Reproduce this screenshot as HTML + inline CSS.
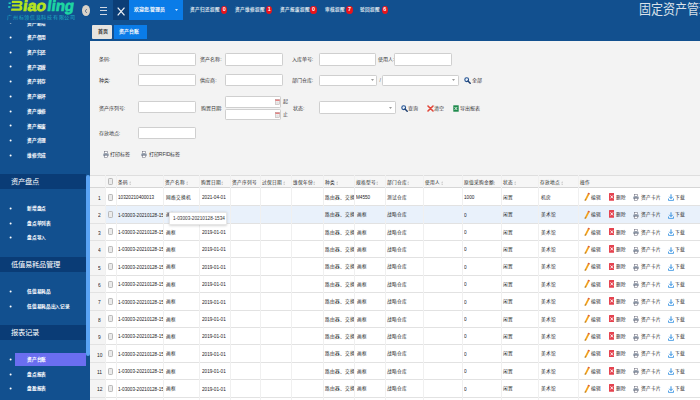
<!DOCTYPE html><html lang="zh-CN"><head><meta charset="utf-8"><style>
*{margin:0;padding:0;box-sizing:border-box}
html,body{width:700px;height:400px;overflow:hidden;background:#12508f;font-family:"Liberation Sans",sans-serif}
.ab{position:absolute;white-space:nowrap}
.t{position:absolute;white-space:nowrap;line-height:1}
.b{font-weight:bold}
</style></head><body>

<div class="ab" style="left:0;top:0;width:90px;height:400px;background:#12508f">
<div class="ab" style="left:0;top:21px;width:90px;height:379px">
<svg class="ab" style="left:8px;top:-0.70px" width="5" height="5" viewBox="0 0 5 5"><circle cx="2.6" cy="2.5" r="1.0" fill="#fff"/></svg>
<div class="t b" style="left:27.20px;top:0.61px;font-size:4.65px;color:#fff;letter-spacing:-0.3px">资产新增</div>
<svg class="ab" style="left:8px;top:14.00px" width="5" height="5" viewBox="0 0 5 5"><circle cx="2.6" cy="2.5" r="1.0" fill="#fff"/></svg>
<div class="t b" style="left:27.20px;top:15.31px;font-size:4.65px;color:#fff;letter-spacing:-0.3px">资产借用</div>
<svg class="ab" style="left:8px;top:28.70px" width="5" height="5" viewBox="0 0 5 5"><circle cx="2.6" cy="2.5" r="1.0" fill="#fff"/></svg>
<div class="t b" style="left:27.20px;top:30.01px;font-size:4.65px;color:#fff;letter-spacing:-0.3px">资产归还</div>
<svg class="ab" style="left:8px;top:43.40px" width="5" height="5" viewBox="0 0 5 5"><circle cx="2.6" cy="2.5" r="1.0" fill="#fff"/></svg>
<div class="t b" style="left:27.20px;top:44.71px;font-size:4.65px;color:#fff;letter-spacing:-0.3px">资产调拨</div>
<svg class="ab" style="left:8px;top:58.10px" width="5" height="5" viewBox="0 0 5 5"><circle cx="2.6" cy="2.5" r="1.0" fill="#fff"/></svg>
<div class="t b" style="left:27.20px;top:59.41px;font-size:4.65px;color:#fff;letter-spacing:-0.3px">资产转存</div>
<svg class="ab" style="left:8px;top:72.80px" width="5" height="5" viewBox="0 0 5 5"><circle cx="2.6" cy="2.5" r="1.0" fill="#fff"/></svg>
<div class="t b" style="left:27.20px;top:74.11px;font-size:4.65px;color:#fff;letter-spacing:-0.3px">资产损坏</div>
<svg class="ab" style="left:8px;top:87.50px" width="5" height="5" viewBox="0 0 5 5"><circle cx="2.6" cy="2.5" r="1.0" fill="#fff"/></svg>
<div class="t b" style="left:27.20px;top:88.81px;font-size:4.65px;color:#fff;letter-spacing:-0.3px">资产维修</div>
<svg class="ab" style="left:8px;top:102.20px" width="5" height="5" viewBox="0 0 5 5"><circle cx="2.6" cy="2.5" r="1.0" fill="#fff"/></svg>
<div class="t b" style="left:27.20px;top:103.51px;font-size:4.65px;color:#fff;letter-spacing:-0.3px">资产报废</div>
<svg class="ab" style="left:8px;top:116.90px" width="5" height="5" viewBox="0 0 5 5"><circle cx="2.6" cy="2.5" r="1.0" fill="#fff"/></svg>
<div class="t b" style="left:27.20px;top:118.21px;font-size:4.65px;color:#fff;letter-spacing:-0.3px">资产清理</div>
<svg class="ab" style="left:8px;top:131.60px" width="5" height="5" viewBox="0 0 5 5"><circle cx="2.6" cy="2.5" r="1.0" fill="#fff"/></svg>
<div class="t b" style="left:27.20px;top:132.91px;font-size:4.65px;color:#fff;letter-spacing:-0.3px">维修完成</div>
<svg class="ab" style="left:8px;top:185.00px" width="5" height="5" viewBox="0 0 5 5"><circle cx="2.6" cy="2.5" r="1.0" fill="#fff"/></svg>
<div class="t b" style="left:27.20px;top:186.31px;font-size:4.65px;color:#fff;letter-spacing:-0.3px">新增盘点</div>
<svg class="ab" style="left:8px;top:199.80px" width="5" height="5" viewBox="0 0 5 5"><circle cx="2.6" cy="2.5" r="1.0" fill="#fff"/></svg>
<div class="t b" style="left:27.20px;top:201.11px;font-size:4.65px;color:#fff;letter-spacing:-0.3px">盘点单列表</div>
<svg class="ab" style="left:8px;top:214.00px" width="5" height="5" viewBox="0 0 5 5"><circle cx="2.6" cy="2.5" r="1.0" fill="#fff"/></svg>
<div class="t b" style="left:27.20px;top:215.31px;font-size:4.65px;color:#fff;letter-spacing:-0.3px">盘点导入</div>
<svg class="ab" style="left:8px;top:267.50px" width="5" height="5" viewBox="0 0 5 5"><circle cx="2.6" cy="2.5" r="1.0" fill="#fff"/></svg>
<div class="t b" style="left:27.20px;top:268.81px;font-size:4.65px;color:#fff;letter-spacing:-0.3px">低值易耗品</div>
<svg class="ab" style="left:8px;top:282.50px" width="5" height="5" viewBox="0 0 5 5"><circle cx="2.6" cy="2.5" r="1.0" fill="#fff"/></svg>
<div class="t b" style="left:27.20px;top:283.81px;font-size:4.65px;color:#fff;letter-spacing:-0.3px">低值易耗品出入记录</div>
<div class="ab" style="left:15px;top:331.60px;width:71px;height:13.8px;background:#6b6ef0"></div>
<svg class="ab" style="left:8px;top:336.00px" width="5" height="5" viewBox="0 0 5 5"><circle cx="2.6" cy="2.5" r="1.0" fill="#fff"/></svg>
<div class="t b" style="left:27.20px;top:337.31px;font-size:4.65px;color:#fff;letter-spacing:-0.3px">资产台账</div>
<svg class="ab" style="left:8px;top:350.50px" width="5" height="5" viewBox="0 0 5 5"><circle cx="2.6" cy="2.5" r="1.0" fill="#fff"/></svg>
<div class="t b" style="left:27.20px;top:351.81px;font-size:4.65px;color:#fff;letter-spacing:-0.3px">盘点报表</div>
<svg class="ab" style="left:8px;top:365.10px" width="5" height="5" viewBox="0 0 5 5"><circle cx="2.6" cy="2.5" r="1.0" fill="#fff"/></svg>
<div class="t b" style="left:27.20px;top:366.41px;font-size:4.65px;color:#fff;letter-spacing:-0.3px">盘盈报表</div>
<div class="ab" style="left:0;top:153.00px;width:86px;height:15.30px;background:#0a3c76"></div>
<div class="t" style="left:11.30px;top:157.37px;font-size:7.30px;color:#ffffff;">资产盘点</div>
<div class="ab" style="left:0;top:236.00px;width:86px;height:14.80px;background:#0a3c76"></div>
<div class="t" style="left:11.30px;top:240.11px;font-size:7.30px;color:#ffffff;">低值易耗品管理</div>
<div class="ab" style="left:0;top:304.00px;width:86px;height:14.80px;background:#0a3c76"></div>
<div class="t" style="left:11.30px;top:308.11px;font-size:7.30px;color:#ffffff;">报表记录</div>
<div class="ab" style="left:86.2px;top:153.60px;width:3.6px;height:181.40px;border-radius:2px;background:#5aa3f4"></div>
</div>
<div class="ab" style="left:0;top:0;width:90px;height:22.8px;background:#12508f"></div>
<svg class="ab" style="left:0;top:0" width="90" height="21" viewBox="0 0 90 21">
<g fill="#b6e41e">
<path d="M12.0 0.8H19.6Q22.8 0.8 22.6 3.4Q22.4 5.2 21.0 5.6Q22.6 6.2 22.4 8.2Q22.1 10.8 18.8 10.8H11.0L11.4 8.6H18.4Q19.6 8.6 19.7 7.7Q19.8 6.6 18.6 6.6H11.8L12.1 4.6H18.8Q20.0 4.6 20.1 3.8Q20.2 3.0 19.0 3.0H11.6Z"/>
</g>
<rect x="8.6" y="2.4" width="2.2" height="1.6" fill="#22d0c0"/>
<rect x="8.2" y="6.2" width="2.2" height="1.6" fill="#22d0c0"/>
<g transform="translate(1.0 0) skewX(-8)">
<text x="23.0" y="10.8" font-family="Liberation Sans" font-weight="bold" font-size="15.2" fill="#b6e41e" stroke="#b6e41e" stroke-width="0.7" textLength="23" lengthAdjust="spacingAndGlyphs">iao</text>
<text x="47.4" y="10.8" font-family="Liberation Sans" font-weight="bold" font-size="15.2" fill="#1ed6a2" stroke="#1ed6a2" stroke-width="0.7" textLength="26.6" lengthAdjust="spacingAndGlyphs">ling</text>
</g>
</svg>
<div class="t" style="left:7.40px;top:14.65px;font-size:5.00px;color:#20b2c6;letter-spacing:0.68px">广州标领信息科技有限公司</div>
</div>
<div class="ab" style="left:81.5px;top:5.1px;width:8.6px;height:11.2px;border-radius:50%;background:#d9d3c9"></div>
<svg class="ab" style="left:84px;top:8px" width="4" height="6" viewBox="0 0 4 6"><path d="M2.8 1L1.2 3L2.8 5" stroke="#6b7b94" stroke-width="1" fill="none"/></svg>
<div class="ab" style="left:100px;top:6.60px;width:7.2px;height:1px;background:#cfd7e3"></div>
<div class="ab" style="left:100px;top:10.10px;width:7.2px;height:1px;background:#cfd7e3"></div>
<div class="ab" style="left:100px;top:13.60px;width:7.2px;height:1px;background:#cfd7e3"></div>
<div class="ab" style="left:113px;top:0;width:16px;height:19.8px;background:#0c3e76"></div>
<svg class="ab" style="left:116.8px;top:6.6px" width="8.2" height="9" viewBox="0 0 8.2 9"><path d="M0.7 0.7L7.5 8.3M7.5 0.7L0.7 8.3" stroke="#eef2f6" stroke-width="1.25"/></svg>
<div class="ab" style="left:129px;top:0;width:54px;height:19.8px;background:#0a7ce8"></div>
<div class="t b" style="left:134.00px;top:8.20px;font-size:4.90px;color:#f6f9fc;">欢迎您,管理员</div>
<svg class="ab" style="left:175px;top:8.8px" width="3" height="2" viewBox="0 0 3 2"><path d="M0 0H3L1.5 1.9Z" fill="#d4e6fb"/></svg>
<div class="t b" style="left:190.00px;top:7.73px;font-size:4.60px;color:#d9e1ea;letter-spacing:-0.1px">资产归还提醒</div>
<div class="ab" style="left:221.00px;top:5.8px;width:6.3px;height:8.2px;border-radius:50%;background:#e8141b"></div>
<div class="t b" style="left:221.00px;top:7.31px;width:6.3px;text-align:center;font-size:5.4px;color:#fff">0</div>
<div class="t b" style="left:235.00px;top:7.73px;font-size:4.60px;color:#d9e1ea;letter-spacing:-0.1px">资产维修提醒</div>
<div class="ab" style="left:266.00px;top:5.8px;width:6.3px;height:8.2px;border-radius:50%;background:#e8141b"></div>
<div class="t b" style="left:266.00px;top:7.31px;width:6.3px;text-align:center;font-size:5.4px;color:#fff">1</div>
<div class="t b" style="left:280.20px;top:7.73px;font-size:4.60px;color:#d9e1ea;letter-spacing:-0.1px">资产报废提醒</div>
<div class="ab" style="left:310.30px;top:5.8px;width:6.3px;height:8.2px;border-radius:50%;background:#e8141b"></div>
<div class="t b" style="left:310.30px;top:7.31px;width:6.3px;text-align:center;font-size:5.4px;color:#fff">0</div>
<div class="t b" style="left:324.90px;top:7.73px;font-size:4.60px;color:#d9e1ea;letter-spacing:-0.1px">审核提醒</div>
<div class="ab" style="left:346.30px;top:5.8px;width:6.3px;height:8.2px;border-radius:50%;background:#e8141b"></div>
<div class="t b" style="left:346.30px;top:7.31px;width:6.3px;text-align:center;font-size:5.4px;color:#fff">7</div>
<div class="t b" style="left:360.20px;top:7.73px;font-size:4.60px;color:#d9e1ea;letter-spacing:-0.1px">驳回提醒</div>
<div class="ab" style="left:381.50px;top:5.8px;width:6.3px;height:8.2px;border-radius:50%;background:#e8141b"></div>
<div class="t b" style="left:381.50px;top:7.31px;width:6.3px;text-align:center;font-size:5.4px;color:#fff">6</div>
<div class="t" style="left:638.80px;top:4.20px;font-size:12.00px;color:#dce2ea;transform:scaleY(1.12);transform-origin:0 50%">固定资产管理</div>
<div class="ab" style="left:92px;top:25px;width:20px;height:13.8px;background:#e6e4e0;border-radius:1px"></div>
<div class="t b" style="left:97.50px;top:29.80px;font-size:4.90px;color:#333;">首页</div>
<div class="ab" style="left:114px;top:25px;width:33.2px;height:13.8px;background:#0a7ce8"></div>
<div class="t b" style="left:118.90px;top:29.80px;font-size:4.90px;color:#f6f9fc;">资产台账</div>
<div class="ab" style="left:90.3px;top:40.6px;width:610px;height:360px;background:#f3f3f3"></div>
<div class="t" style="left:98.80px;top:57.35px;font-size:5.00px;color:#363636;">条码:</div>
<div class="ab" style="left:137.60px;top:53.40px;width:58.00px;height:12.20px;background:#fff;border:0.6px solid #cfcfcf;border-radius:1.2px"></div>
<div class="t" style="left:200.30px;top:57.35px;font-size:5.00px;color:#363636;">资产名称:</div>
<div class="ab" style="left:225.30px;top:53.40px;width:58.00px;height:12.20px;background:#fff;border:0.6px solid #cfcfcf;border-radius:1.2px"></div>
<div class="t" style="left:291.80px;top:57.35px;font-size:5.00px;color:#363636;">入库单号:</div>
<div class="ab" style="left:318.50px;top:53.40px;width:57.90px;height:12.20px;background:#fff;border:0.6px solid #cfcfcf;border-radius:1.2px"></div>
<div class="t" style="left:378.00px;top:57.35px;font-size:5.00px;color:#363636;">使用人:</div>
<div class="ab" style="left:394.30px;top:53.40px;width:58.00px;height:12.20px;background:#fff;border:0.6px solid #cfcfcf;border-radius:1.2px"></div>
<div class="t" style="left:98.80px;top:78.35px;font-size:5.00px;color:#363636;">种类:</div>
<div class="ab" style="left:137.60px;top:74.40px;width:58.00px;height:12.10px;background:#fff;border:0.6px solid #cfcfcf;border-radius:1.2px"></div>
<div class="t" style="left:200.30px;top:78.35px;font-size:5.00px;color:#363636;">供应商:</div>
<div class="ab" style="left:225.30px;top:74.40px;width:58.00px;height:12.10px;background:#fff;border:0.6px solid #cfcfcf;border-radius:1.2px"></div>
<div class="t" style="left:291.80px;top:78.35px;font-size:5.00px;color:#363636;">部门仓库:</div>
<div class="ab" style="left:318.50px;top:74.50px;width:58.90px;height:11.70px;background:#fff;border:0.6px solid #cfcfcf;border-radius:1.2px"></div>
<svg class="ab" style="left:370.80px;top:79.45px" width="3" height="2" viewBox="0 0 3 2"><path d="M0 0H3L1.5 1.9Z" fill="#9a9a9a"/></svg>
<div class="t" style="left:379.60px;top:78.15px;font-size:5.00px;color:#666;">/</div>
<div class="ab" style="left:382.30px;top:74.50px;width:76.70px;height:11.70px;background:#fff;border:0.6px solid #cfcfcf;border-radius:1.2px"></div>
<svg class="ab" style="left:452.40px;top:79.45px" width="3" height="2" viewBox="0 0 3 2"><path d="M0 0H3L1.5 1.9Z" fill="#9a9a9a"/></svg>
<svg class="ab" style="left:464.30px;top:77.00px" width="7" height="7" viewBox="0 0 7 7"><circle cx="2.7" cy="2.7" r="1.9" fill="#e8f0fa" stroke="#1f4f8f" stroke-width="1.1"/><path d="M4 4L6.2 6.2" stroke="#1f3f6f" stroke-width="1.5" stroke-linecap="round"/></svg>
<div class="t" style="left:472.00px;top:78.35px;font-size:5.00px;color:#363636;">全部</div>
<div class="t" style="left:98.80px;top:105.75px;font-size:5.00px;color:#363636;">资产序列号:</div>
<div class="ab" style="left:137.60px;top:101.40px;width:58.00px;height:12.00px;background:#fff;border:0.6px solid #cfcfcf;border-radius:1.2px"></div>
<div class="t" style="left:200.60px;top:105.75px;font-size:5.00px;color:#363636;">购置日期:</div>
<div class="ab" style="left:225.00px;top:95.70px;width:56.00px;height:12.00px;background:#fff;border:0.6px solid #cfcfcf;border-radius:1.2px"></div>
<div class="ab" style="left:225.00px;top:108.90px;width:56.00px;height:11.40px;background:#fff;border:0.6px solid #cfcfcf;border-radius:1.2px"></div>
<svg class="ab" style="left:274.50px;top:98.80px" width="5" height="6" viewBox="0 0 5 6"><rect x="0.4" y="0.6" width="4.2" height="5" fill="#fff" stroke="#a99" stroke-width="0.5"/><rect x="0.4" y="0.6" width="4.2" height="1.2" fill="#d66"/><path d="M1.2 3h2.6M1.2 4.2h2.6" stroke="#999" stroke-width="0.4"/></svg>
<svg class="ab" style="left:274.50px;top:111.80px" width="5" height="6" viewBox="0 0 5 6"><rect x="0.4" y="0.6" width="4.2" height="5" fill="#fff" stroke="#a99" stroke-width="0.5"/><rect x="0.4" y="0.6" width="4.2" height="1.2" fill="#d66"/><path d="M1.2 3h2.6M1.2 4.2h2.6" stroke="#999" stroke-width="0.4"/></svg>
<div class="t" style="left:283.00px;top:99.35px;font-size:5.00px;color:#363636;">起</div>
<div class="t" style="left:283.00px;top:112.35px;font-size:5.00px;color:#363636;">止</div>
<div class="t" style="left:292.90px;top:105.75px;font-size:5.00px;color:#363636;">状态:</div>
<div class="ab" style="left:318.60px;top:101.40px;width:77.10px;height:12.30px;background:#fff;border:0.6px solid #cfcfcf;border-radius:1.2px"></div>
<svg class="ab" style="left:389.10px;top:106.65px" width="3" height="2" viewBox="0 0 3 2"><path d="M0 0H3L1.5 1.9Z" fill="#9a9a9a"/></svg>
<svg class="ab" style="left:400.90px;top:104.50px" width="7" height="7" viewBox="0 0 7 7"><circle cx="2.7" cy="2.7" r="1.9" fill="#e8f0fa" stroke="#1f4f8f" stroke-width="1.1"/><path d="M4 4L6.2 6.2" stroke="#1f3f6f" stroke-width="1.5" stroke-linecap="round"/></svg>
<div class="t" style="left:408.00px;top:105.75px;font-size:5.00px;color:#363636;">查询</div>
<svg class="ab" style="left:426.6px;top:104.5px" width="7" height="7" viewBox="0 0 7 7"><path d="M1 1L6 6M6 1L1 6" stroke="#e2473a" stroke-width="1.6" stroke-linecap="round"/></svg>
<div class="t" style="left:434.00px;top:105.75px;font-size:5.00px;color:#363636;">清空</div>
<svg class="ab" style="left:452.9px;top:104.5px" width="6" height="7" viewBox="0 0 6 7"><rect x="0.3" y="0.3" width="5.4" height="6.4" fill="#1e8a4c"/><path d="M1.6 2L4.2 5M4.2 2L1.6 5" stroke="#fff" stroke-width="0.8"/></svg>
<div class="t" style="left:460.00px;top:105.75px;font-size:5.00px;color:#363636;">导出报表</div>
<div class="t" style="left:98.80px;top:131.35px;font-size:5.00px;color:#363636;">存放地点:</div>
<div class="ab" style="left:137.60px;top:126.60px;width:58.00px;height:12.40px;background:#fff;border:0.6px solid #cfcfcf;border-radius:1.2px"></div>
<svg class="ab" style="left:102.80px;top:151.00px" width="6" height="7" viewBox="0 0 6 7"><rect x="1.5" y="0.5" width="3" height="2" fill="#fff" stroke="#667" stroke-width="0.5"/><rect x="0.3" y="2.4" width="5.4" height="2.8" rx="0.6" fill="#8a96a6"/><rect x="1.5" y="4.2" width="3" height="2.3" fill="#fff" stroke="#667" stroke-width="0.5"/></svg>
<div class="t" style="left:110.00px;top:152.05px;font-size:5.00px;color:#363636;">打印标签</div>
<svg class="ab" style="left:141.40px;top:151.00px" width="6" height="7" viewBox="0 0 6 7"><rect x="1.5" y="0.5" width="3" height="2" fill="#fff" stroke="#667" stroke-width="0.5"/><rect x="0.3" y="2.4" width="5.4" height="2.8" rx="0.6" fill="#8a96a6"/><rect x="1.5" y="4.2" width="3" height="2.3" fill="#fff" stroke="#667" stroke-width="0.5"/></svg>
<div class="t" style="left:148.80px;top:152.05px;font-size:5.00px;color:#363636;">打印RFID标签</div>
<div class="ab" style="left:90.3px;top:175.00px;width:610px;height:225.00px;background:#fff"></div>
<div class="ab" style="left:90.3px;top:174.80px;width:610px;height:13.20px;background:#f6f6f6;border-top:0.5px solid #dedede;border-bottom:0.6px solid #d6d6d6"></div>
<div class="ab" style="left:90.3px;top:188.20px;width:14.7px;height:400.00px;background:#f4f4f4"></div>
<div class="t" style="left:117.60px;top:180.98px;font-size:4.70px;color:#262626;">条码</div>
<svg class="ab" style="left:128.60px;top:180.80px" width="2.4" height="4.6" viewBox="0 0 2.4 4.6"><path d="M1.2 0.2L2.2 1.8H0.2Z M1.2 4.4L2.2 2.8H0.2Z" fill="#c2c2c2"/></svg>
<div class="t" style="left:165.30px;top:180.98px;font-size:4.70px;color:#262626;">资产名称</div>
<svg class="ab" style="left:185.70px;top:180.80px" width="2.4" height="4.6" viewBox="0 0 2.4 4.6"><path d="M1.2 0.2L2.2 1.8H0.2Z M1.2 4.4L2.2 2.8H0.2Z" fill="#c2c2c2"/></svg>
<div class="t" style="left:201.00px;top:180.98px;font-size:4.70px;color:#262626;">购置日期</div>
<svg class="ab" style="left:221.40px;top:180.80px" width="2.4" height="4.6" viewBox="0 0 2.4 4.6"><path d="M1.2 0.2L2.2 1.8H0.2Z M1.2 4.4L2.2 2.8H0.2Z" fill="#c2c2c2"/></svg>
<div class="t" style="left:232.20px;top:180.98px;font-size:4.70px;color:#262626;">资产序列号</div>
<div class="t" style="left:262.20px;top:180.98px;font-size:4.70px;color:#262626;">过保日期</div>
<svg class="ab" style="left:282.60px;top:180.80px" width="2.4" height="4.6" viewBox="0 0 2.4 4.6"><path d="M1.2 0.2L2.2 1.8H0.2Z M1.2 4.4L2.2 2.8H0.2Z" fill="#c2c2c2"/></svg>
<div class="t" style="left:293.00px;top:180.98px;font-size:4.70px;color:#262626;">维保年份</div>
<svg class="ab" style="left:313.40px;top:180.80px" width="2.4" height="4.6" viewBox="0 0 2.4 4.6"><path d="M1.2 0.2L2.2 1.8H0.2Z M1.2 4.4L2.2 2.8H0.2Z" fill="#c2c2c2"/></svg>
<div class="t" style="left:324.50px;top:180.98px;font-size:4.70px;color:#262626;">种类</div>
<svg class="ab" style="left:335.50px;top:180.80px" width="2.4" height="4.6" viewBox="0 0 2.4 4.6"><path d="M1.2 0.2L2.2 1.8H0.2Z M1.2 4.4L2.2 2.8H0.2Z" fill="#c2c2c2"/></svg>
<div class="t" style="left:355.90px;top:180.98px;font-size:4.70px;color:#262626;">规格型号</div>
<svg class="ab" style="left:376.30px;top:180.80px" width="2.4" height="4.6" viewBox="0 0 2.4 4.6"><path d="M1.2 0.2L2.2 1.8H0.2Z M1.2 4.4L2.2 2.8H0.2Z" fill="#c2c2c2"/></svg>
<div class="t" style="left:386.50px;top:180.98px;font-size:4.70px;color:#262626;">部门仓库</div>
<svg class="ab" style="left:406.90px;top:180.80px" width="2.4" height="4.6" viewBox="0 0 2.4 4.6"><path d="M1.2 0.2L2.2 1.8H0.2Z M1.2 4.4L2.2 2.8H0.2Z" fill="#c2c2c2"/></svg>
<div class="t" style="left:424.80px;top:180.98px;font-size:4.70px;color:#262626;">使用人</div>
<svg class="ab" style="left:440.50px;top:180.80px" width="2.4" height="4.6" viewBox="0 0 2.4 4.6"><path d="M1.2 0.2L2.2 1.8H0.2Z M1.2 4.4L2.2 2.8H0.2Z" fill="#c2c2c2"/></svg>
<div class="t" style="left:463.60px;top:180.98px;font-size:4.70px;color:#262626;">原值采购金额</div>
<svg class="ab" style="left:493.40px;top:180.80px" width="2.4" height="4.6" viewBox="0 0 2.4 4.6"><path d="M1.2 0.2L2.2 1.8H0.2Z M1.2 4.4L2.2 2.8H0.2Z" fill="#c2c2c2"/></svg>
<div class="t" style="left:502.50px;top:180.98px;font-size:4.70px;color:#262626;">状态</div>
<svg class="ab" style="left:513.50px;top:180.80px" width="2.4" height="4.6" viewBox="0 0 2.4 4.6"><path d="M1.2 0.2L2.2 1.8H0.2Z M1.2 4.4L2.2 2.8H0.2Z" fill="#c2c2c2"/></svg>
<div class="t" style="left:540.20px;top:180.98px;font-size:4.70px;color:#262626;">存放地点</div>
<svg class="ab" style="left:560.60px;top:180.80px" width="2.4" height="4.6" viewBox="0 0 2.4 4.6"><path d="M1.2 0.2L2.2 1.8H0.2Z M1.2 4.4L2.2 2.8H0.2Z" fill="#c2c2c2"/></svg>
<div class="t" style="left:579.90px;top:180.98px;font-size:4.70px;color:#262626;">操作</div>
<div class="ab" style="left:108px;top:178px;width:5.4px;height:7.2px;border:0.75px solid #b9b9b9;border-radius:1.2px;background:#ebebeb"></div>
<div class="ab" style="left:90.3px;top:205.10px;width:610px;height:0.5px;background:#e2e2e2"></div>
<div class="t" style="left:98.00px;top:194.97px;font-size:6.10px;color:#1e1e1e;transform:scaleX(0.800);transform-origin:0 0">1</div>
<div class="ab" style="left:108px;top:193.50px;width:5.4px;height:7.2px;border:0.75px solid #b9b9b9;border-radius:1.2px;background:#ebebeb"></div>
<div class="t" style="left:118.10px;top:195.12px;font-size:5.80px;color:#222;transform:scaleX(0.800);transform-origin:0 0">10320210400013</div>
<div class="t" style="left:166.00px;top:195.81px;font-size:4.65px;color:#1c1c1c;">网络交换机</div>
<div class="t" style="left:201.50px;top:195.12px;font-size:5.80px;color:#222;transform:scaleX(0.800);transform-origin:0 0">2021-04-01</div>
<div class="t" style="left:325.20px;top:195.81px;font-size:4.65px;color:#1c1c1c;">路由器、交换</div>
<div class="t" style="left:356.40px;top:195.12px;font-size:5.80px;color:#222;transform:scaleX(0.800);transform-origin:0 0">M4550</div>
<div class="t" style="left:387.20px;top:195.81px;font-size:4.65px;color:#1c1c1c;">测试仓库</div>
<div class="t" style="left:464.10px;top:195.12px;font-size:5.80px;color:#222;transform:scaleX(0.800);transform-origin:0 0">1000</div>
<div class="t" style="left:503.20px;top:195.81px;font-size:4.65px;color:#1c1c1c;">闲置</div>
<div class="t" style="left:540.90px;top:195.81px;font-size:4.65px;color:#1c1c1c;">机房</div>
<svg class="ab" style="left:583.6px;top:192.30px" width="7" height="10" viewBox="0 0 7 10"><path d="M4.2 0.8L5.8 1.6L2.4 8.2L0.9 8.9L0.8 7.4Z" fill="#f2a21e"/><path d="M4.2 0.8L5.8 1.6L5.3 2.6L3.7 1.8Z" fill="#d9534f"/><path d="M0.9 8.9L0.8 7.4L1.6 7.8Z" fill="#333"/></svg>
<div class="t" style="left:591.00px;top:195.78px;font-size:4.70px;color:#1c1c1c;">编辑</div>
<svg class="ab" style="left:608.8px;top:192.90px" width="5.6" height="7.8" viewBox="0 0 5.6 7.8"><rect width="5.6" height="7.8" rx="0.5" fill="#e5434f"/><path d="M1.5 2.4L4.1 5.4M4.1 2.4L1.5 5.4" stroke="#fff" stroke-width="0.9"/></svg>
<div class="t" style="left:616.00px;top:195.78px;font-size:4.70px;color:#1c1c1c;">删除</div>
<svg class="ab" style="left:633.00px;top:194.40px" width="6" height="7" viewBox="0 0 6 7"><rect x="1.5" y="0.5" width="3" height="2" fill="#fff" stroke="#667" stroke-width="0.5"/><rect x="0.3" y="2.4" width="5.4" height="2.8" rx="0.6" fill="#8a96a6"/><rect x="1.5" y="4.2" width="3" height="2.3" fill="#fff" stroke="#667" stroke-width="0.5"/></svg>
<div class="t" style="left:640.50px;top:195.78px;font-size:4.70px;color:#1c1c1c;">资产卡片</div>
<svg class="ab" style="left:667.5px;top:194.40px" width="6" height="7" viewBox="0 0 6 7"><path d="M3 0.3V4.3M1.3 2.8L3 4.6L4.7 2.8" stroke="#2f8ee0" stroke-width="1" fill="none"/><path d="M0.5 4.5V6.4H5.5V4.5" stroke="#2f8ee0" stroke-width="0.8" fill="none"/></svg>
<div class="t" style="left:675.00px;top:195.78px;font-size:4.70px;color:#1c1c1c;">下载</div>
<div class="ab" style="left:105px;top:205.60px;width:595px;height:17.40px;background:#e9f1fb"></div>
<div class="ab" style="left:90.3px;top:222.50px;width:610px;height:0.5px;background:#e2e2e2"></div>
<div class="t" style="left:98.00px;top:212.37px;font-size:6.10px;color:#1e1e1e;transform:scaleX(0.800);transform-origin:0 0">2</div>
<div class="ab" style="left:108px;top:210.90px;width:5.4px;height:7.2px;border:0.75px solid #b9b9b9;border-radius:1.2px;background:#ebebeb"></div>
<div class="t" style="left:118.10px;top:212.52px;font-size:5.80px;color:#222;transform:scaleX(0.800);transform-origin:0 0">1-03003-20210128-15</div>
<div class="t" style="left:166.00px;top:213.21px;font-size:4.65px;color:#1c1c1c;">画框</div>
<div class="t" style="left:201.50px;top:212.52px;font-size:5.80px;color:#222;transform:scaleX(0.800);transform-origin:0 0">2019-01-01</div>
<div class="t" style="left:325.20px;top:213.21px;font-size:4.65px;color:#1c1c1c;">路由器、交换</div>
<div class="t" style="left:356.60px;top:213.21px;font-size:4.65px;color:#1c1c1c;">画框</div>
<div class="t" style="left:387.20px;top:213.21px;font-size:4.65px;color:#1c1c1c;">战略仓库</div>
<div class="t" style="left:464.10px;top:212.52px;font-size:5.80px;color:#222;transform:scaleX(0.800);transform-origin:0 0">0</div>
<div class="t" style="left:503.20px;top:213.21px;font-size:4.65px;color:#1c1c1c;">闲置</div>
<div class="t" style="left:540.90px;top:213.21px;font-size:4.65px;color:#1c1c1c;">美术馆</div>
<svg class="ab" style="left:583.6px;top:209.70px" width="7" height="10" viewBox="0 0 7 10"><path d="M4.2 0.8L5.8 1.6L2.4 8.2L0.9 8.9L0.8 7.4Z" fill="#f2a21e"/><path d="M4.2 0.8L5.8 1.6L5.3 2.6L3.7 1.8Z" fill="#d9534f"/><path d="M0.9 8.9L0.8 7.4L1.6 7.8Z" fill="#333"/></svg>
<div class="t" style="left:591.00px;top:213.18px;font-size:4.70px;color:#1c1c1c;">编辑</div>
<svg class="ab" style="left:608.8px;top:210.30px" width="5.6" height="7.8" viewBox="0 0 5.6 7.8"><rect width="5.6" height="7.8" rx="0.5" fill="#e5434f"/><path d="M1.5 2.4L4.1 5.4M4.1 2.4L1.5 5.4" stroke="#fff" stroke-width="0.9"/></svg>
<div class="t" style="left:616.00px;top:213.18px;font-size:4.70px;color:#1c1c1c;">删除</div>
<svg class="ab" style="left:633.00px;top:211.80px" width="6" height="7" viewBox="0 0 6 7"><rect x="1.5" y="0.5" width="3" height="2" fill="#fff" stroke="#667" stroke-width="0.5"/><rect x="0.3" y="2.4" width="5.4" height="2.8" rx="0.6" fill="#8a96a6"/><rect x="1.5" y="4.2" width="3" height="2.3" fill="#fff" stroke="#667" stroke-width="0.5"/></svg>
<div class="t" style="left:640.50px;top:213.18px;font-size:4.70px;color:#1c1c1c;">资产卡片</div>
<svg class="ab" style="left:667.5px;top:211.80px" width="6" height="7" viewBox="0 0 6 7"><path d="M3 0.3V4.3M1.3 2.8L3 4.6L4.7 2.8" stroke="#2f8ee0" stroke-width="1" fill="none"/><path d="M0.5 4.5V6.4H5.5V4.5" stroke="#2f8ee0" stroke-width="0.8" fill="none"/></svg>
<div class="t" style="left:675.00px;top:213.18px;font-size:4.70px;color:#1c1c1c;">下载</div>
<div class="ab" style="left:90.3px;top:239.90px;width:610px;height:0.5px;background:#e2e2e2"></div>
<div class="t" style="left:98.00px;top:229.77px;font-size:6.10px;color:#1e1e1e;transform:scaleX(0.800);transform-origin:0 0">3</div>
<div class="ab" style="left:108px;top:228.30px;width:5.4px;height:7.2px;border:0.75px solid #b9b9b9;border-radius:1.2px;background:#ebebeb"></div>
<div class="t" style="left:118.10px;top:229.92px;font-size:5.80px;color:#222;transform:scaleX(0.800);transform-origin:0 0">1-03003-20210128-15</div>
<div class="t" style="left:166.00px;top:230.61px;font-size:4.65px;color:#1c1c1c;">画框</div>
<div class="t" style="left:201.50px;top:229.92px;font-size:5.80px;color:#222;transform:scaleX(0.800);transform-origin:0 0">2019-01-01</div>
<div class="t" style="left:325.20px;top:230.61px;font-size:4.65px;color:#1c1c1c;">路由器、交换</div>
<div class="t" style="left:356.60px;top:230.61px;font-size:4.65px;color:#1c1c1c;">画框</div>
<div class="t" style="left:387.20px;top:230.61px;font-size:4.65px;color:#1c1c1c;">战略仓库</div>
<div class="t" style="left:464.10px;top:229.92px;font-size:5.80px;color:#222;transform:scaleX(0.800);transform-origin:0 0">0</div>
<div class="t" style="left:503.20px;top:230.61px;font-size:4.65px;color:#1c1c1c;">闲置</div>
<div class="t" style="left:540.90px;top:230.61px;font-size:4.65px;color:#1c1c1c;">美术馆</div>
<svg class="ab" style="left:583.6px;top:227.10px" width="7" height="10" viewBox="0 0 7 10"><path d="M4.2 0.8L5.8 1.6L2.4 8.2L0.9 8.9L0.8 7.4Z" fill="#f2a21e"/><path d="M4.2 0.8L5.8 1.6L5.3 2.6L3.7 1.8Z" fill="#d9534f"/><path d="M0.9 8.9L0.8 7.4L1.6 7.8Z" fill="#333"/></svg>
<div class="t" style="left:591.00px;top:230.58px;font-size:4.70px;color:#1c1c1c;">编辑</div>
<svg class="ab" style="left:608.8px;top:227.70px" width="5.6" height="7.8" viewBox="0 0 5.6 7.8"><rect width="5.6" height="7.8" rx="0.5" fill="#e5434f"/><path d="M1.5 2.4L4.1 5.4M4.1 2.4L1.5 5.4" stroke="#fff" stroke-width="0.9"/></svg>
<div class="t" style="left:616.00px;top:230.58px;font-size:4.70px;color:#1c1c1c;">删除</div>
<svg class="ab" style="left:633.00px;top:229.20px" width="6" height="7" viewBox="0 0 6 7"><rect x="1.5" y="0.5" width="3" height="2" fill="#fff" stroke="#667" stroke-width="0.5"/><rect x="0.3" y="2.4" width="5.4" height="2.8" rx="0.6" fill="#8a96a6"/><rect x="1.5" y="4.2" width="3" height="2.3" fill="#fff" stroke="#667" stroke-width="0.5"/></svg>
<div class="t" style="left:640.50px;top:230.58px;font-size:4.70px;color:#1c1c1c;">资产卡片</div>
<svg class="ab" style="left:667.5px;top:229.20px" width="6" height="7" viewBox="0 0 6 7"><path d="M3 0.3V4.3M1.3 2.8L3 4.6L4.7 2.8" stroke="#2f8ee0" stroke-width="1" fill="none"/><path d="M0.5 4.5V6.4H5.5V4.5" stroke="#2f8ee0" stroke-width="0.8" fill="none"/></svg>
<div class="t" style="left:675.00px;top:230.58px;font-size:4.70px;color:#1c1c1c;">下载</div>
<div class="ab" style="left:90.3px;top:257.30px;width:610px;height:0.5px;background:#e2e2e2"></div>
<div class="t" style="left:98.00px;top:247.17px;font-size:6.10px;color:#1e1e1e;transform:scaleX(0.800);transform-origin:0 0">4</div>
<div class="ab" style="left:108px;top:245.70px;width:5.4px;height:7.2px;border:0.75px solid #b9b9b9;border-radius:1.2px;background:#ebebeb"></div>
<div class="t" style="left:118.10px;top:247.32px;font-size:5.80px;color:#222;transform:scaleX(0.800);transform-origin:0 0">1-03003-20210128-15</div>
<div class="t" style="left:166.00px;top:248.01px;font-size:4.65px;color:#1c1c1c;">画框</div>
<div class="t" style="left:201.50px;top:247.32px;font-size:5.80px;color:#222;transform:scaleX(0.800);transform-origin:0 0">2019-01-01</div>
<div class="t" style="left:325.20px;top:248.01px;font-size:4.65px;color:#1c1c1c;">路由器、交换</div>
<div class="t" style="left:356.60px;top:248.01px;font-size:4.65px;color:#1c1c1c;">画框</div>
<div class="t" style="left:387.20px;top:248.01px;font-size:4.65px;color:#1c1c1c;">战略仓库</div>
<div class="t" style="left:464.10px;top:247.32px;font-size:5.80px;color:#222;transform:scaleX(0.800);transform-origin:0 0">0</div>
<div class="t" style="left:503.20px;top:248.01px;font-size:4.65px;color:#1c1c1c;">闲置</div>
<div class="t" style="left:540.90px;top:248.01px;font-size:4.65px;color:#1c1c1c;">美术馆</div>
<svg class="ab" style="left:583.6px;top:244.50px" width="7" height="10" viewBox="0 0 7 10"><path d="M4.2 0.8L5.8 1.6L2.4 8.2L0.9 8.9L0.8 7.4Z" fill="#f2a21e"/><path d="M4.2 0.8L5.8 1.6L5.3 2.6L3.7 1.8Z" fill="#d9534f"/><path d="M0.9 8.9L0.8 7.4L1.6 7.8Z" fill="#333"/></svg>
<div class="t" style="left:591.00px;top:247.98px;font-size:4.70px;color:#1c1c1c;">编辑</div>
<svg class="ab" style="left:608.8px;top:245.10px" width="5.6" height="7.8" viewBox="0 0 5.6 7.8"><rect width="5.6" height="7.8" rx="0.5" fill="#e5434f"/><path d="M1.5 2.4L4.1 5.4M4.1 2.4L1.5 5.4" stroke="#fff" stroke-width="0.9"/></svg>
<div class="t" style="left:616.00px;top:247.98px;font-size:4.70px;color:#1c1c1c;">删除</div>
<svg class="ab" style="left:633.00px;top:246.60px" width="6" height="7" viewBox="0 0 6 7"><rect x="1.5" y="0.5" width="3" height="2" fill="#fff" stroke="#667" stroke-width="0.5"/><rect x="0.3" y="2.4" width="5.4" height="2.8" rx="0.6" fill="#8a96a6"/><rect x="1.5" y="4.2" width="3" height="2.3" fill="#fff" stroke="#667" stroke-width="0.5"/></svg>
<div class="t" style="left:640.50px;top:247.98px;font-size:4.70px;color:#1c1c1c;">资产卡片</div>
<svg class="ab" style="left:667.5px;top:246.60px" width="6" height="7" viewBox="0 0 6 7"><path d="M3 0.3V4.3M1.3 2.8L3 4.6L4.7 2.8" stroke="#2f8ee0" stroke-width="1" fill="none"/><path d="M0.5 4.5V6.4H5.5V4.5" stroke="#2f8ee0" stroke-width="0.8" fill="none"/></svg>
<div class="t" style="left:675.00px;top:247.98px;font-size:4.70px;color:#1c1c1c;">下载</div>
<div class="ab" style="left:90.3px;top:274.70px;width:610px;height:0.5px;background:#e2e2e2"></div>
<div class="t" style="left:98.00px;top:264.57px;font-size:6.10px;color:#1e1e1e;transform:scaleX(0.800);transform-origin:0 0">5</div>
<div class="ab" style="left:108px;top:263.10px;width:5.4px;height:7.2px;border:0.75px solid #b9b9b9;border-radius:1.2px;background:#ebebeb"></div>
<div class="t" style="left:118.10px;top:264.72px;font-size:5.80px;color:#222;transform:scaleX(0.800);transform-origin:0 0">1-03003-20210128-15</div>
<div class="t" style="left:166.00px;top:265.41px;font-size:4.65px;color:#1c1c1c;">画框</div>
<div class="t" style="left:201.50px;top:264.72px;font-size:5.80px;color:#222;transform:scaleX(0.800);transform-origin:0 0">2019-01-01</div>
<div class="t" style="left:325.20px;top:265.41px;font-size:4.65px;color:#1c1c1c;">路由器、交换</div>
<div class="t" style="left:356.60px;top:265.41px;font-size:4.65px;color:#1c1c1c;">画框</div>
<div class="t" style="left:387.20px;top:265.41px;font-size:4.65px;color:#1c1c1c;">战略仓库</div>
<div class="t" style="left:464.10px;top:264.72px;font-size:5.80px;color:#222;transform:scaleX(0.800);transform-origin:0 0">0</div>
<div class="t" style="left:503.20px;top:265.41px;font-size:4.65px;color:#1c1c1c;">闲置</div>
<div class="t" style="left:540.90px;top:265.41px;font-size:4.65px;color:#1c1c1c;">美术馆</div>
<svg class="ab" style="left:583.6px;top:261.90px" width="7" height="10" viewBox="0 0 7 10"><path d="M4.2 0.8L5.8 1.6L2.4 8.2L0.9 8.9L0.8 7.4Z" fill="#f2a21e"/><path d="M4.2 0.8L5.8 1.6L5.3 2.6L3.7 1.8Z" fill="#d9534f"/><path d="M0.9 8.9L0.8 7.4L1.6 7.8Z" fill="#333"/></svg>
<div class="t" style="left:591.00px;top:265.38px;font-size:4.70px;color:#1c1c1c;">编辑</div>
<svg class="ab" style="left:608.8px;top:262.50px" width="5.6" height="7.8" viewBox="0 0 5.6 7.8"><rect width="5.6" height="7.8" rx="0.5" fill="#e5434f"/><path d="M1.5 2.4L4.1 5.4M4.1 2.4L1.5 5.4" stroke="#fff" stroke-width="0.9"/></svg>
<div class="t" style="left:616.00px;top:265.38px;font-size:4.70px;color:#1c1c1c;">删除</div>
<svg class="ab" style="left:633.00px;top:264.00px" width="6" height="7" viewBox="0 0 6 7"><rect x="1.5" y="0.5" width="3" height="2" fill="#fff" stroke="#667" stroke-width="0.5"/><rect x="0.3" y="2.4" width="5.4" height="2.8" rx="0.6" fill="#8a96a6"/><rect x="1.5" y="4.2" width="3" height="2.3" fill="#fff" stroke="#667" stroke-width="0.5"/></svg>
<div class="t" style="left:640.50px;top:265.38px;font-size:4.70px;color:#1c1c1c;">资产卡片</div>
<svg class="ab" style="left:667.5px;top:264.00px" width="6" height="7" viewBox="0 0 6 7"><path d="M3 0.3V4.3M1.3 2.8L3 4.6L4.7 2.8" stroke="#2f8ee0" stroke-width="1" fill="none"/><path d="M0.5 4.5V6.4H5.5V4.5" stroke="#2f8ee0" stroke-width="0.8" fill="none"/></svg>
<div class="t" style="left:675.00px;top:265.38px;font-size:4.70px;color:#1c1c1c;">下载</div>
<div class="ab" style="left:90.3px;top:292.10px;width:610px;height:0.5px;background:#e2e2e2"></div>
<div class="t" style="left:98.00px;top:281.97px;font-size:6.10px;color:#1e1e1e;transform:scaleX(0.800);transform-origin:0 0">6</div>
<div class="ab" style="left:108px;top:280.50px;width:5.4px;height:7.2px;border:0.75px solid #b9b9b9;border-radius:1.2px;background:#ebebeb"></div>
<div class="t" style="left:118.10px;top:282.12px;font-size:5.80px;color:#222;transform:scaleX(0.800);transform-origin:0 0">1-03003-20210128-15</div>
<div class="t" style="left:166.00px;top:282.81px;font-size:4.65px;color:#1c1c1c;">画框</div>
<div class="t" style="left:201.50px;top:282.12px;font-size:5.80px;color:#222;transform:scaleX(0.800);transform-origin:0 0">2019-01-01</div>
<div class="t" style="left:325.20px;top:282.81px;font-size:4.65px;color:#1c1c1c;">路由器、交换</div>
<div class="t" style="left:356.60px;top:282.81px;font-size:4.65px;color:#1c1c1c;">画框</div>
<div class="t" style="left:387.20px;top:282.81px;font-size:4.65px;color:#1c1c1c;">战略仓库</div>
<div class="t" style="left:464.10px;top:282.12px;font-size:5.80px;color:#222;transform:scaleX(0.800);transform-origin:0 0">0</div>
<div class="t" style="left:503.20px;top:282.81px;font-size:4.65px;color:#1c1c1c;">闲置</div>
<div class="t" style="left:540.90px;top:282.81px;font-size:4.65px;color:#1c1c1c;">美术馆</div>
<svg class="ab" style="left:583.6px;top:279.30px" width="7" height="10" viewBox="0 0 7 10"><path d="M4.2 0.8L5.8 1.6L2.4 8.2L0.9 8.9L0.8 7.4Z" fill="#f2a21e"/><path d="M4.2 0.8L5.8 1.6L5.3 2.6L3.7 1.8Z" fill="#d9534f"/><path d="M0.9 8.9L0.8 7.4L1.6 7.8Z" fill="#333"/></svg>
<div class="t" style="left:591.00px;top:282.78px;font-size:4.70px;color:#1c1c1c;">编辑</div>
<svg class="ab" style="left:608.8px;top:279.90px" width="5.6" height="7.8" viewBox="0 0 5.6 7.8"><rect width="5.6" height="7.8" rx="0.5" fill="#e5434f"/><path d="M1.5 2.4L4.1 5.4M4.1 2.4L1.5 5.4" stroke="#fff" stroke-width="0.9"/></svg>
<div class="t" style="left:616.00px;top:282.78px;font-size:4.70px;color:#1c1c1c;">删除</div>
<svg class="ab" style="left:633.00px;top:281.40px" width="6" height="7" viewBox="0 0 6 7"><rect x="1.5" y="0.5" width="3" height="2" fill="#fff" stroke="#667" stroke-width="0.5"/><rect x="0.3" y="2.4" width="5.4" height="2.8" rx="0.6" fill="#8a96a6"/><rect x="1.5" y="4.2" width="3" height="2.3" fill="#fff" stroke="#667" stroke-width="0.5"/></svg>
<div class="t" style="left:640.50px;top:282.78px;font-size:4.70px;color:#1c1c1c;">资产卡片</div>
<svg class="ab" style="left:667.5px;top:281.40px" width="6" height="7" viewBox="0 0 6 7"><path d="M3 0.3V4.3M1.3 2.8L3 4.6L4.7 2.8" stroke="#2f8ee0" stroke-width="1" fill="none"/><path d="M0.5 4.5V6.4H5.5V4.5" stroke="#2f8ee0" stroke-width="0.8" fill="none"/></svg>
<div class="t" style="left:675.00px;top:282.78px;font-size:4.70px;color:#1c1c1c;">下载</div>
<div class="ab" style="left:90.3px;top:309.50px;width:610px;height:0.5px;background:#e2e2e2"></div>
<div class="t" style="left:98.00px;top:299.37px;font-size:6.10px;color:#1e1e1e;transform:scaleX(0.800);transform-origin:0 0">7</div>
<div class="ab" style="left:108px;top:297.90px;width:5.4px;height:7.2px;border:0.75px solid #b9b9b9;border-radius:1.2px;background:#ebebeb"></div>
<div class="t" style="left:118.10px;top:299.52px;font-size:5.80px;color:#222;transform:scaleX(0.800);transform-origin:0 0">1-03003-20210128-15</div>
<div class="t" style="left:166.00px;top:300.21px;font-size:4.65px;color:#1c1c1c;">画框</div>
<div class="t" style="left:201.50px;top:299.52px;font-size:5.80px;color:#222;transform:scaleX(0.800);transform-origin:0 0">2019-01-01</div>
<div class="t" style="left:325.20px;top:300.21px;font-size:4.65px;color:#1c1c1c;">路由器、交换</div>
<div class="t" style="left:356.60px;top:300.21px;font-size:4.65px;color:#1c1c1c;">画框</div>
<div class="t" style="left:387.20px;top:300.21px;font-size:4.65px;color:#1c1c1c;">战略仓库</div>
<div class="t" style="left:464.10px;top:299.52px;font-size:5.80px;color:#222;transform:scaleX(0.800);transform-origin:0 0">0</div>
<div class="t" style="left:503.20px;top:300.21px;font-size:4.65px;color:#1c1c1c;">闲置</div>
<div class="t" style="left:540.90px;top:300.21px;font-size:4.65px;color:#1c1c1c;">美术馆</div>
<svg class="ab" style="left:583.6px;top:296.70px" width="7" height="10" viewBox="0 0 7 10"><path d="M4.2 0.8L5.8 1.6L2.4 8.2L0.9 8.9L0.8 7.4Z" fill="#f2a21e"/><path d="M4.2 0.8L5.8 1.6L5.3 2.6L3.7 1.8Z" fill="#d9534f"/><path d="M0.9 8.9L0.8 7.4L1.6 7.8Z" fill="#333"/></svg>
<div class="t" style="left:591.00px;top:300.18px;font-size:4.70px;color:#1c1c1c;">编辑</div>
<svg class="ab" style="left:608.8px;top:297.30px" width="5.6" height="7.8" viewBox="0 0 5.6 7.8"><rect width="5.6" height="7.8" rx="0.5" fill="#e5434f"/><path d="M1.5 2.4L4.1 5.4M4.1 2.4L1.5 5.4" stroke="#fff" stroke-width="0.9"/></svg>
<div class="t" style="left:616.00px;top:300.18px;font-size:4.70px;color:#1c1c1c;">删除</div>
<svg class="ab" style="left:633.00px;top:298.80px" width="6" height="7" viewBox="0 0 6 7"><rect x="1.5" y="0.5" width="3" height="2" fill="#fff" stroke="#667" stroke-width="0.5"/><rect x="0.3" y="2.4" width="5.4" height="2.8" rx="0.6" fill="#8a96a6"/><rect x="1.5" y="4.2" width="3" height="2.3" fill="#fff" stroke="#667" stroke-width="0.5"/></svg>
<div class="t" style="left:640.50px;top:300.18px;font-size:4.70px;color:#1c1c1c;">资产卡片</div>
<svg class="ab" style="left:667.5px;top:298.80px" width="6" height="7" viewBox="0 0 6 7"><path d="M3 0.3V4.3M1.3 2.8L3 4.6L4.7 2.8" stroke="#2f8ee0" stroke-width="1" fill="none"/><path d="M0.5 4.5V6.4H5.5V4.5" stroke="#2f8ee0" stroke-width="0.8" fill="none"/></svg>
<div class="t" style="left:675.00px;top:300.18px;font-size:4.70px;color:#1c1c1c;">下载</div>
<div class="ab" style="left:90.3px;top:326.90px;width:610px;height:0.5px;background:#e2e2e2"></div>
<div class="t" style="left:98.00px;top:316.77px;font-size:6.10px;color:#1e1e1e;transform:scaleX(0.800);transform-origin:0 0">8</div>
<div class="ab" style="left:108px;top:315.30px;width:5.4px;height:7.2px;border:0.75px solid #b9b9b9;border-radius:1.2px;background:#ebebeb"></div>
<div class="t" style="left:118.10px;top:316.92px;font-size:5.80px;color:#222;transform:scaleX(0.800);transform-origin:0 0">1-03003-20210128-15</div>
<div class="t" style="left:166.00px;top:317.61px;font-size:4.65px;color:#1c1c1c;">画框</div>
<div class="t" style="left:201.50px;top:316.92px;font-size:5.80px;color:#222;transform:scaleX(0.800);transform-origin:0 0">2019-01-01</div>
<div class="t" style="left:325.20px;top:317.61px;font-size:4.65px;color:#1c1c1c;">路由器、交换</div>
<div class="t" style="left:356.60px;top:317.61px;font-size:4.65px;color:#1c1c1c;">画框</div>
<div class="t" style="left:387.20px;top:317.61px;font-size:4.65px;color:#1c1c1c;">战略仓库</div>
<div class="t" style="left:464.10px;top:316.92px;font-size:5.80px;color:#222;transform:scaleX(0.800);transform-origin:0 0">0</div>
<div class="t" style="left:503.20px;top:317.61px;font-size:4.65px;color:#1c1c1c;">闲置</div>
<div class="t" style="left:540.90px;top:317.61px;font-size:4.65px;color:#1c1c1c;">美术馆</div>
<svg class="ab" style="left:583.6px;top:314.10px" width="7" height="10" viewBox="0 0 7 10"><path d="M4.2 0.8L5.8 1.6L2.4 8.2L0.9 8.9L0.8 7.4Z" fill="#f2a21e"/><path d="M4.2 0.8L5.8 1.6L5.3 2.6L3.7 1.8Z" fill="#d9534f"/><path d="M0.9 8.9L0.8 7.4L1.6 7.8Z" fill="#333"/></svg>
<div class="t" style="left:591.00px;top:317.58px;font-size:4.70px;color:#1c1c1c;">编辑</div>
<svg class="ab" style="left:608.8px;top:314.70px" width="5.6" height="7.8" viewBox="0 0 5.6 7.8"><rect width="5.6" height="7.8" rx="0.5" fill="#e5434f"/><path d="M1.5 2.4L4.1 5.4M4.1 2.4L1.5 5.4" stroke="#fff" stroke-width="0.9"/></svg>
<div class="t" style="left:616.00px;top:317.58px;font-size:4.70px;color:#1c1c1c;">删除</div>
<svg class="ab" style="left:633.00px;top:316.20px" width="6" height="7" viewBox="0 0 6 7"><rect x="1.5" y="0.5" width="3" height="2" fill="#fff" stroke="#667" stroke-width="0.5"/><rect x="0.3" y="2.4" width="5.4" height="2.8" rx="0.6" fill="#8a96a6"/><rect x="1.5" y="4.2" width="3" height="2.3" fill="#fff" stroke="#667" stroke-width="0.5"/></svg>
<div class="t" style="left:640.50px;top:317.58px;font-size:4.70px;color:#1c1c1c;">资产卡片</div>
<svg class="ab" style="left:667.5px;top:316.20px" width="6" height="7" viewBox="0 0 6 7"><path d="M3 0.3V4.3M1.3 2.8L3 4.6L4.7 2.8" stroke="#2f8ee0" stroke-width="1" fill="none"/><path d="M0.5 4.5V6.4H5.5V4.5" stroke="#2f8ee0" stroke-width="0.8" fill="none"/></svg>
<div class="t" style="left:675.00px;top:317.58px;font-size:4.70px;color:#1c1c1c;">下载</div>
<div class="ab" style="left:90.3px;top:344.30px;width:610px;height:0.5px;background:#e2e2e2"></div>
<div class="t" style="left:98.00px;top:334.17px;font-size:6.10px;color:#1e1e1e;transform:scaleX(0.800);transform-origin:0 0">9</div>
<div class="ab" style="left:108px;top:332.70px;width:5.4px;height:7.2px;border:0.75px solid #b9b9b9;border-radius:1.2px;background:#ebebeb"></div>
<div class="t" style="left:118.10px;top:334.32px;font-size:5.80px;color:#222;transform:scaleX(0.800);transform-origin:0 0">1-03003-20210128-15</div>
<div class="t" style="left:166.00px;top:335.01px;font-size:4.65px;color:#1c1c1c;">画框</div>
<div class="t" style="left:201.50px;top:334.32px;font-size:5.80px;color:#222;transform:scaleX(0.800);transform-origin:0 0">2019-01-01</div>
<div class="t" style="left:325.20px;top:335.01px;font-size:4.65px;color:#1c1c1c;">路由器、交换</div>
<div class="t" style="left:356.60px;top:335.01px;font-size:4.65px;color:#1c1c1c;">画框</div>
<div class="t" style="left:387.20px;top:335.01px;font-size:4.65px;color:#1c1c1c;">战略仓库</div>
<div class="t" style="left:464.10px;top:334.32px;font-size:5.80px;color:#222;transform:scaleX(0.800);transform-origin:0 0">0</div>
<div class="t" style="left:503.20px;top:335.01px;font-size:4.65px;color:#1c1c1c;">闲置</div>
<div class="t" style="left:540.90px;top:335.01px;font-size:4.65px;color:#1c1c1c;">美术馆</div>
<svg class="ab" style="left:583.6px;top:331.50px" width="7" height="10" viewBox="0 0 7 10"><path d="M4.2 0.8L5.8 1.6L2.4 8.2L0.9 8.9L0.8 7.4Z" fill="#f2a21e"/><path d="M4.2 0.8L5.8 1.6L5.3 2.6L3.7 1.8Z" fill="#d9534f"/><path d="M0.9 8.9L0.8 7.4L1.6 7.8Z" fill="#333"/></svg>
<div class="t" style="left:591.00px;top:334.98px;font-size:4.70px;color:#1c1c1c;">编辑</div>
<svg class="ab" style="left:608.8px;top:332.10px" width="5.6" height="7.8" viewBox="0 0 5.6 7.8"><rect width="5.6" height="7.8" rx="0.5" fill="#e5434f"/><path d="M1.5 2.4L4.1 5.4M4.1 2.4L1.5 5.4" stroke="#fff" stroke-width="0.9"/></svg>
<div class="t" style="left:616.00px;top:334.98px;font-size:4.70px;color:#1c1c1c;">删除</div>
<svg class="ab" style="left:633.00px;top:333.60px" width="6" height="7" viewBox="0 0 6 7"><rect x="1.5" y="0.5" width="3" height="2" fill="#fff" stroke="#667" stroke-width="0.5"/><rect x="0.3" y="2.4" width="5.4" height="2.8" rx="0.6" fill="#8a96a6"/><rect x="1.5" y="4.2" width="3" height="2.3" fill="#fff" stroke="#667" stroke-width="0.5"/></svg>
<div class="t" style="left:640.50px;top:334.98px;font-size:4.70px;color:#1c1c1c;">资产卡片</div>
<svg class="ab" style="left:667.5px;top:333.60px" width="6" height="7" viewBox="0 0 6 7"><path d="M3 0.3V4.3M1.3 2.8L3 4.6L4.7 2.8" stroke="#2f8ee0" stroke-width="1" fill="none"/><path d="M0.5 4.5V6.4H5.5V4.5" stroke="#2f8ee0" stroke-width="0.8" fill="none"/></svg>
<div class="t" style="left:675.00px;top:334.98px;font-size:4.70px;color:#1c1c1c;">下载</div>
<div class="ab" style="left:90.3px;top:361.70px;width:610px;height:0.5px;background:#e2e2e2"></div>
<div class="t" style="left:96.60px;top:351.57px;font-size:6.10px;color:#1e1e1e;transform:scaleX(0.800);transform-origin:0 0">10</div>
<div class="ab" style="left:108px;top:350.10px;width:5.4px;height:7.2px;border:0.75px solid #b9b9b9;border-radius:1.2px;background:#ebebeb"></div>
<div class="t" style="left:118.10px;top:351.72px;font-size:5.80px;color:#222;transform:scaleX(0.800);transform-origin:0 0">1-03003-20210128-15</div>
<div class="t" style="left:166.00px;top:352.41px;font-size:4.65px;color:#1c1c1c;">画框</div>
<div class="t" style="left:201.50px;top:351.72px;font-size:5.80px;color:#222;transform:scaleX(0.800);transform-origin:0 0">2019-01-01</div>
<div class="t" style="left:325.20px;top:352.41px;font-size:4.65px;color:#1c1c1c;">路由器、交换</div>
<div class="t" style="left:356.60px;top:352.41px;font-size:4.65px;color:#1c1c1c;">画框</div>
<div class="t" style="left:387.20px;top:352.41px;font-size:4.65px;color:#1c1c1c;">战略仓库</div>
<div class="t" style="left:464.10px;top:351.72px;font-size:5.80px;color:#222;transform:scaleX(0.800);transform-origin:0 0">0</div>
<div class="t" style="left:503.20px;top:352.41px;font-size:4.65px;color:#1c1c1c;">闲置</div>
<div class="t" style="left:540.90px;top:352.41px;font-size:4.65px;color:#1c1c1c;">美术馆</div>
<svg class="ab" style="left:583.6px;top:348.90px" width="7" height="10" viewBox="0 0 7 10"><path d="M4.2 0.8L5.8 1.6L2.4 8.2L0.9 8.9L0.8 7.4Z" fill="#f2a21e"/><path d="M4.2 0.8L5.8 1.6L5.3 2.6L3.7 1.8Z" fill="#d9534f"/><path d="M0.9 8.9L0.8 7.4L1.6 7.8Z" fill="#333"/></svg>
<div class="t" style="left:591.00px;top:352.38px;font-size:4.70px;color:#1c1c1c;">编辑</div>
<svg class="ab" style="left:608.8px;top:349.50px" width="5.6" height="7.8" viewBox="0 0 5.6 7.8"><rect width="5.6" height="7.8" rx="0.5" fill="#e5434f"/><path d="M1.5 2.4L4.1 5.4M4.1 2.4L1.5 5.4" stroke="#fff" stroke-width="0.9"/></svg>
<div class="t" style="left:616.00px;top:352.38px;font-size:4.70px;color:#1c1c1c;">删除</div>
<svg class="ab" style="left:633.00px;top:351.00px" width="6" height="7" viewBox="0 0 6 7"><rect x="1.5" y="0.5" width="3" height="2" fill="#fff" stroke="#667" stroke-width="0.5"/><rect x="0.3" y="2.4" width="5.4" height="2.8" rx="0.6" fill="#8a96a6"/><rect x="1.5" y="4.2" width="3" height="2.3" fill="#fff" stroke="#667" stroke-width="0.5"/></svg>
<div class="t" style="left:640.50px;top:352.38px;font-size:4.70px;color:#1c1c1c;">资产卡片</div>
<svg class="ab" style="left:667.5px;top:351.00px" width="6" height="7" viewBox="0 0 6 7"><path d="M3 0.3V4.3M1.3 2.8L3 4.6L4.7 2.8" stroke="#2f8ee0" stroke-width="1" fill="none"/><path d="M0.5 4.5V6.4H5.5V4.5" stroke="#2f8ee0" stroke-width="0.8" fill="none"/></svg>
<div class="t" style="left:675.00px;top:352.38px;font-size:4.70px;color:#1c1c1c;">下载</div>
<div class="ab" style="left:90.3px;top:379.10px;width:610px;height:0.5px;background:#e2e2e2"></div>
<div class="t" style="left:96.60px;top:368.97px;font-size:6.10px;color:#1e1e1e;transform:scaleX(0.800);transform-origin:0 0">11</div>
<div class="ab" style="left:108px;top:367.50px;width:5.4px;height:7.2px;border:0.75px solid #b9b9b9;border-radius:1.2px;background:#ebebeb"></div>
<div class="t" style="left:118.10px;top:369.12px;font-size:5.80px;color:#222;transform:scaleX(0.800);transform-origin:0 0">1-03003-20210128-15</div>
<div class="t" style="left:166.00px;top:369.81px;font-size:4.65px;color:#1c1c1c;">画框</div>
<div class="t" style="left:201.50px;top:369.12px;font-size:5.80px;color:#222;transform:scaleX(0.800);transform-origin:0 0">2019-01-01</div>
<div class="t" style="left:325.20px;top:369.81px;font-size:4.65px;color:#1c1c1c;">路由器、交换</div>
<div class="t" style="left:356.60px;top:369.81px;font-size:4.65px;color:#1c1c1c;">画框</div>
<div class="t" style="left:387.20px;top:369.81px;font-size:4.65px;color:#1c1c1c;">战略仓库</div>
<div class="t" style="left:464.10px;top:369.12px;font-size:5.80px;color:#222;transform:scaleX(0.800);transform-origin:0 0">0</div>
<div class="t" style="left:503.20px;top:369.81px;font-size:4.65px;color:#1c1c1c;">闲置</div>
<div class="t" style="left:540.90px;top:369.81px;font-size:4.65px;color:#1c1c1c;">美术馆</div>
<svg class="ab" style="left:583.6px;top:366.30px" width="7" height="10" viewBox="0 0 7 10"><path d="M4.2 0.8L5.8 1.6L2.4 8.2L0.9 8.9L0.8 7.4Z" fill="#f2a21e"/><path d="M4.2 0.8L5.8 1.6L5.3 2.6L3.7 1.8Z" fill="#d9534f"/><path d="M0.9 8.9L0.8 7.4L1.6 7.8Z" fill="#333"/></svg>
<div class="t" style="left:591.00px;top:369.78px;font-size:4.70px;color:#1c1c1c;">编辑</div>
<svg class="ab" style="left:608.8px;top:366.90px" width="5.6" height="7.8" viewBox="0 0 5.6 7.8"><rect width="5.6" height="7.8" rx="0.5" fill="#e5434f"/><path d="M1.5 2.4L4.1 5.4M4.1 2.4L1.5 5.4" stroke="#fff" stroke-width="0.9"/></svg>
<div class="t" style="left:616.00px;top:369.78px;font-size:4.70px;color:#1c1c1c;">删除</div>
<svg class="ab" style="left:633.00px;top:368.40px" width="6" height="7" viewBox="0 0 6 7"><rect x="1.5" y="0.5" width="3" height="2" fill="#fff" stroke="#667" stroke-width="0.5"/><rect x="0.3" y="2.4" width="5.4" height="2.8" rx="0.6" fill="#8a96a6"/><rect x="1.5" y="4.2" width="3" height="2.3" fill="#fff" stroke="#667" stroke-width="0.5"/></svg>
<div class="t" style="left:640.50px;top:369.78px;font-size:4.70px;color:#1c1c1c;">资产卡片</div>
<svg class="ab" style="left:667.5px;top:368.40px" width="6" height="7" viewBox="0 0 6 7"><path d="M3 0.3V4.3M1.3 2.8L3 4.6L4.7 2.8" stroke="#2f8ee0" stroke-width="1" fill="none"/><path d="M0.5 4.5V6.4H5.5V4.5" stroke="#2f8ee0" stroke-width="0.8" fill="none"/></svg>
<div class="t" style="left:675.00px;top:369.78px;font-size:4.70px;color:#1c1c1c;">下载</div>
<div class="ab" style="left:90.3px;top:396.50px;width:610px;height:0.5px;background:#e2e2e2"></div>
<div class="t" style="left:96.60px;top:386.37px;font-size:6.10px;color:#1e1e1e;transform:scaleX(0.800);transform-origin:0 0">12</div>
<div class="ab" style="left:108px;top:384.90px;width:5.4px;height:7.2px;border:0.75px solid #b9b9b9;border-radius:1.2px;background:#ebebeb"></div>
<div class="t" style="left:118.10px;top:386.52px;font-size:5.80px;color:#222;transform:scaleX(0.800);transform-origin:0 0">1-03003-20210128-15</div>
<div class="t" style="left:166.00px;top:387.21px;font-size:4.65px;color:#1c1c1c;">画框</div>
<div class="t" style="left:201.50px;top:386.52px;font-size:5.80px;color:#222;transform:scaleX(0.800);transform-origin:0 0">2019-01-01</div>
<div class="t" style="left:325.20px;top:387.21px;font-size:4.65px;color:#1c1c1c;">路由器、交换</div>
<div class="t" style="left:356.60px;top:387.21px;font-size:4.65px;color:#1c1c1c;">画框</div>
<div class="t" style="left:387.20px;top:387.21px;font-size:4.65px;color:#1c1c1c;">战略仓库</div>
<div class="t" style="left:464.10px;top:386.52px;font-size:5.80px;color:#222;transform:scaleX(0.800);transform-origin:0 0">0</div>
<div class="t" style="left:503.20px;top:387.21px;font-size:4.65px;color:#1c1c1c;">闲置</div>
<div class="t" style="left:540.90px;top:387.21px;font-size:4.65px;color:#1c1c1c;">美术馆</div>
<svg class="ab" style="left:583.6px;top:383.70px" width="7" height="10" viewBox="0 0 7 10"><path d="M4.2 0.8L5.8 1.6L2.4 8.2L0.9 8.9L0.8 7.4Z" fill="#f2a21e"/><path d="M4.2 0.8L5.8 1.6L5.3 2.6L3.7 1.8Z" fill="#d9534f"/><path d="M0.9 8.9L0.8 7.4L1.6 7.8Z" fill="#333"/></svg>
<div class="t" style="left:591.00px;top:387.18px;font-size:4.70px;color:#1c1c1c;">编辑</div>
<svg class="ab" style="left:608.8px;top:384.30px" width="5.6" height="7.8" viewBox="0 0 5.6 7.8"><rect width="5.6" height="7.8" rx="0.5" fill="#e5434f"/><path d="M1.5 2.4L4.1 5.4M4.1 2.4L1.5 5.4" stroke="#fff" stroke-width="0.9"/></svg>
<div class="t" style="left:616.00px;top:387.18px;font-size:4.70px;color:#1c1c1c;">删除</div>
<svg class="ab" style="left:633.00px;top:385.80px" width="6" height="7" viewBox="0 0 6 7"><rect x="1.5" y="0.5" width="3" height="2" fill="#fff" stroke="#667" stroke-width="0.5"/><rect x="0.3" y="2.4" width="5.4" height="2.8" rx="0.6" fill="#8a96a6"/><rect x="1.5" y="4.2" width="3" height="2.3" fill="#fff" stroke="#667" stroke-width="0.5"/></svg>
<div class="t" style="left:640.50px;top:387.18px;font-size:4.70px;color:#1c1c1c;">资产卡片</div>
<svg class="ab" style="left:667.5px;top:385.80px" width="6" height="7" viewBox="0 0 6 7"><path d="M3 0.3V4.3M1.3 2.8L3 4.6L4.7 2.8" stroke="#2f8ee0" stroke-width="1" fill="none"/><path d="M0.5 4.5V6.4H5.5V4.5" stroke="#2f8ee0" stroke-width="0.8" fill="none"/></svg>
<div class="t" style="left:675.00px;top:387.18px;font-size:4.70px;color:#1c1c1c;">下载</div>
<div class="ab" style="left:104.75px;top:175.00px;width:0.5px;height:225.00px;background:#f0f0f0"></div>
<div class="ab" style="left:115.75px;top:175.00px;width:0.5px;height:225.00px;background:#f0f0f0"></div>
<div class="ab" style="left:163.45px;top:175.00px;width:0.5px;height:225.00px;background:#f0f0f0"></div>
<div class="ab" style="left:199.15px;top:175.00px;width:0.5px;height:225.00px;background:#f0f0f0"></div>
<div class="ab" style="left:230.35px;top:175.00px;width:0.5px;height:225.00px;background:#f0f0f0"></div>
<div class="ab" style="left:260.35px;top:175.00px;width:0.5px;height:225.00px;background:#f0f0f0"></div>
<div class="ab" style="left:291.15px;top:175.00px;width:0.5px;height:225.00px;background:#f0f0f0"></div>
<div class="ab" style="left:322.65px;top:175.00px;width:0.5px;height:225.00px;background:#f0f0f0"></div>
<div class="ab" style="left:354.05px;top:175.00px;width:0.5px;height:225.00px;background:#f0f0f0"></div>
<div class="ab" style="left:384.65px;top:175.00px;width:0.5px;height:225.00px;background:#f0f0f0"></div>
<div class="ab" style="left:422.95px;top:175.00px;width:0.5px;height:225.00px;background:#f0f0f0"></div>
<div class="ab" style="left:461.75px;top:175.00px;width:0.5px;height:225.00px;background:#f0f0f0"></div>
<div class="ab" style="left:500.65px;top:175.00px;width:0.5px;height:225.00px;background:#f0f0f0"></div>
<div class="ab" style="left:538.35px;top:175.00px;width:0.5px;height:225.00px;background:#f0f0f0"></div>
<div class="ab" style="left:578.05px;top:175.00px;width:0.5px;height:225.00px;background:#f0f0f0"></div>
<div class="ab" style="left:168.6px;top:212.2px;width:58.8px;height:12.4px;background:#fff;border:0.5px solid #e6e6e6;border-radius:1px;box-shadow:0 0.6px 2.5px rgba(0,0,0,0.16)"></div>
<div class="t" style="left:172.60px;top:215.67px;font-size:5.90px;color:#333;transform:scaleX(0.800);transform-origin:0 0">1-03003-20210128-1534</div>
</body></html>
